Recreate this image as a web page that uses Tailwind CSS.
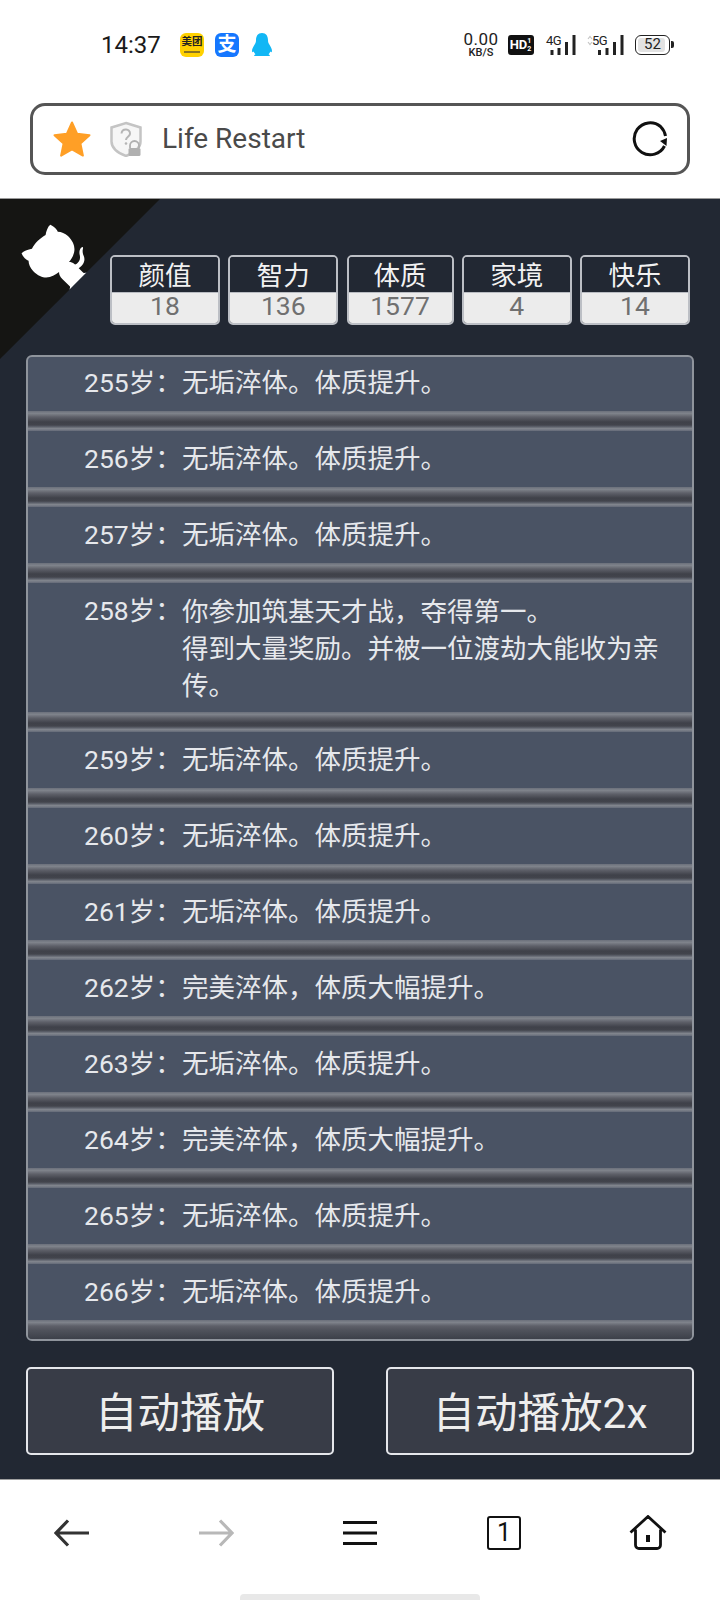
<!DOCTYPE html>
<html lang="zh-CN">
<head>
    <meta charset="UTF-8">
    <meta name="viewport" content="width=device-width, initial-scale=1.0">
    <title>Life Restart</title>
    <script src="https://cdn.jsdelivr.net/npm/@tailwindcss/browser@4"></script>
</head>
<body class="bg-white font-['Roboto','Noto_Sans_CJK_SC',sans-serif]">
<div class="w-[720px] h-[1600px] flex flex-col overflow-hidden">

    <!-- browser chrome -->
    <header class="h-[199px] shrink-0 bg-white border-b border-[#9a9a9a] pt-[30px]">
        <div class="h-[30px] flex items-center pl-[101px] pr-[50px]">
            <span class="w-[60px] text-[24px] leading-[30px] text-[#1a1a1a]">14:37</span>
            <div class="ml-[19px] w-[24px] h-[24px] rounded-[6px] bg-[#ffd100] flex flex-col items-center overflow-hidden">
                <span class="text-[10.5px] leading-[15px] mt-[1px] font-bold text-[#222]">美团</span>
                <span class="w-[16px] h-[2px] mt-[2px] bg-[#8a7420]"></span>
            </div>
            <div class="ml-[11px] w-[24px] h-[24px] rounded-[6px] bg-[#1677ff] flex items-center justify-center">
                <span class="text-[19px] leading-[24px] font-bold text-white">支</span>
            </div>
            <svg class="ml-[13px]" width="20" height="24" viewBox="0 0 20 24"><path d="M10 0C5.8 0 4 3.2 4 7.2c0 1.4-.3 2.6-1.2 4C1.400 13.400 0 15.800 0 18c0 1.400.8 1.500 1.700.4.300 1.100 1 2.100 1.800 2.800-.9.400-1.500 1-1.300 1.800h15.600c.2-.8-.4-1.400-1.300-1.800.8-.7 1.500-1.700 1.800-2.800.9 1.100 1.700 1 1.700-.4 0-2.200-1.400-4.600-2.800-6.800-.9-1.400-1.200-2.600-1.200-4C16 3.200 14.200 0 10 0z" fill="#12b7f5"/></svg>

            <div class="ml-auto flex items-center">
                <div class="w-[36px] flex flex-col items-center text-[#222]">
                    <span class="text-[17px] leading-[15px] tracking-[0.5px]">0.00</span>
                    <span class="text-[11px] leading-[11px] font-medium">KB/S</span>
                </div>
                <div class="ml-[9px] w-[26px] h-[20px] rounded-[3px] bg-[#111] flex items-center justify-center">
                    <span class="text-[13px] leading-[20px] font-bold text-white">HD</span>
                    <span class="text-[7px] leading-[8px] font-bold text-white w-[5px]">1 2</span>
                </div>
                <div class="ml-[12px] relative w-[30px] h-[20px]">
                    <span class="absolute left-0 -top-[1px] text-[13px] leading-[13px] tracking-[-0.5px] text-[#222]">4G</span>
                    <svg class="absolute left-0 top-0" width="30" height="20" viewBox="0 0 30 20" fill="#222"><rect x="4.500" y="15" width="3" height="5"/><rect x="11.500" y="13" width="3" height="7"/><rect x="19" y="7" width="3" height="13"/><rect x="26.500" y="0" width="3" height="20"/></svg>
                </div>
                <div class="ml-[11px] relative w-[37px] h-[20px]">
                    <span class="absolute left-[5px] -top-[1px] text-[13px] leading-[13px] tracking-[-0.5px] text-[#222]">5G</span>
                    <svg class="absolute left-0 top-0" width="37" height="20" viewBox="0 0 37 20"><path d="M1 4l2-2.500L5 4M1 7l2 2.500L5 7" fill="none" stroke="#c4c4c4" stroke-width="1.200"/><g fill="#222"><rect x="11" y="15" width="3" height="5"/><rect x="18.500" y="13" width="3" height="7"/><rect x="26" y="7" width="3" height="13"/><rect x="33.500" y="0" width="3" height="20"/></g></svg>
                </div>
                <div class="ml-[11px] relative w-[35px] h-[20px] rounded-[6px] border-[1.5px] border-[#222] p-[2px]">
                    <div class="w-[27px] h-full rounded-[3px] bg-[#e2e2e2]"></div>
                    <span class="absolute inset-0 text-center text-[15px] leading-[17px] text-[#222]">52</span>
                    <span class="absolute -right-[4.500px] top-[5px] w-[2.500px] h-[7px] rounded-r-[2px] bg-[#222]"></span>
                </div>
            </div>
        </div>

        <div class="mt-[43px] ml-[30px] w-[660px] h-[72px] rounded-[15px] border-[3px] border-[#555] flex items-center pl-[20px] pr-[19px]">
            <svg width="38" height="36" viewBox="0 0 38 36"><path d="M19 1.500l5.200 11.300 12.300 1.400-9.100 8.300 2.500 12.100L19 28.500 8.100 34.600l2.500-12.100-9.100-8.300 12.300-1.400z" fill="#ff9f26" stroke="#ff9f26" stroke-width="2" stroke-linejoin="round"/></svg>
            <svg class="ml-[18px]" width="34" height="36" viewBox="0 0 34 36"><path d="M17 2l14.500 4.500v14c0 7-6.500 11.500-14.500 14.500C9 32 2.500 27.500 2.500 20.500v-14z" fill="#f6f6f6" stroke="#c4c4c4" stroke-width="2.500"/><path d="M12.500 12.500c.6-5.500 9-5 8.500.3-.3 3-4 3-4 6.200" fill="none" stroke="#b5b5b5" stroke-width="2"/><circle cx="17" cy="22.500" r="1.300" fill="#b5b5b5"/><path d="M21 27v-2.500a4.500 4.500 0 0 1 9 0V27" fill="none" stroke="#b0b0b0" stroke-width="1.800"/><rect x="19.500" y="27" width="12" height="8" rx="1.500" fill="#b0b0b0"/></svg>
            <span class="ml-[19px] text-[28px] leading-[36px] text-[#4a4a4a]">Life Restart</span>
            <svg class="ml-auto" width="36" height="36" viewBox="0 0 36 36"><path d="M32.500 25A16 16 0 1 1 28.500 5.500Q32.500 9.500 33.500 15" fill="none" stroke="#111" stroke-width="3"/><path d="M28 20L35 17L34.500 25z" fill="#111"/></svg>
        </div>
    </header>

    <!-- game -->
    <main class="relative h-[1280px] shrink-0 bg-[#222833] px-[26px]">
        <svg class="absolute left-0 top-0 -scale-x-100" width="160" height="160" viewBox="0 0 250 250">
            <path d="M0,0 L115,115 L130,115 L142,142 L250,250 L250,0 Z" fill="#151513"/>
            <path d="M128.300,109.000 C113.800,99.700 119.000,89.600 119.000,89.600 C122.000,82.700 120.500,78.600 120.500,78.600 C119.200,72.000 123.400,76.300 123.400,76.300 C127.300,80.900 125.500,87.300 125.500,87.300 C122.900,97.600 130.600,101.900 134.400,103.200" fill="#fff"/>
            <path d="M115.000,115.000 C114.900,115.100 118.700,116.500 119.800,115.400 L133.700,101.600 C136.900,99.200 139.900,98.400 142.200,98.600 C133.800,88.000 127.500,74.400 143.800,58.000 C148.500,53.400 154.000,51.200 159.700,51.000 C160.300,49.400 163.200,43.600 171.400,40.100 C171.400,40.100 176.100,42.500 178.800,56.200 C183.100,58.600 187.200,61.800 190.900,65.400 C194.500,69.000 197.700,73.200 200.100,77.600 C213.800,80.200 216.300,84.900 216.300,84.900 C212.700,93.100 206.900,96.000 205.400,96.600 C205.100,102.400 203.000,107.800 198.300,112.500 C181.900,128.900 168.300,122.500 157.700,114.100 C157.900,116.900 156.700,120.900 152.700,124.900 L141.000,136.500 C139.800,137.700 141.600,141.900 141.800,141.800 Z" fill="#fff"/>
        </svg>

        <!-- stats -->
        <div class="relative ml-[84px] pt-[56px] w-[580px] flex justify-between">
            <div class="w-[110px] h-[70px] rounded-[5px] border-2 border-[#bcbfc5] overflow-hidden text-center text-[26.500px]">
                <div class="h-[36px] leading-[38px] text-[#f2f2f2] bg-[#222833] border-b border-[#b9bcc2]">颜值</div>
                <div class="h-[30px] leading-[25px] text-[#707070] bg-[#ececec]">18</div>
            </div>
            <div class="w-[110px] h-[70px] rounded-[5px] border-2 border-[#bcbfc5] overflow-hidden text-center text-[26.500px]">
                <div class="h-[36px] leading-[38px] text-[#f2f2f2] bg-[#222833] border-b border-[#b9bcc2]">智力</div>
                <div class="h-[30px] leading-[25px] text-[#707070] bg-[#ececec]">136</div>
            </div>
            <div class="w-[107px] h-[70px] rounded-[5px] border-2 border-[#bcbfc5] overflow-hidden text-center text-[26.500px]">
                <div class="h-[36px] leading-[38px] text-[#f2f2f2] bg-[#222833] border-b border-[#b9bcc2]">体质</div>
                <div class="h-[30px] leading-[25px] text-[#707070] bg-[#ececec]">1577</div>
            </div>
            <div class="w-[110px] h-[70px] rounded-[5px] border-2 border-[#bcbfc5] overflow-hidden text-center text-[26.500px]">
                <div class="h-[36px] leading-[38px] text-[#f2f2f2] bg-[#222833] border-b border-[#b9bcc2]">家境</div>
                <div class="h-[30px] leading-[25px] text-[#707070] bg-[#ececec]">4</div>
            </div>
            <div class="w-[110px] h-[70px] rounded-[5px] border-2 border-[#bcbfc5] overflow-hidden text-center text-[26.500px]">
                <div class="h-[36px] leading-[38px] text-[#f2f2f2] bg-[#222833] border-b border-[#b9bcc2]">快乐</div>
                <div class="h-[30px] leading-[25px] text-[#707070] bg-[#ececec]">14</div>
            </div>
        </div>

        <!-- life trajectory -->
        <div class="relative mt-[30px] h-[986px] rounded-[6px] border-2 border-[#8f949c] bg-[#4a5364] overflow-hidden text-[26.500px] leading-[36.500px] text-[#e6e8ec]">
            <div class="-mt-[2px]">
                <div class="flex h-[56px] pt-[10px] pl-[56px]"><span class="w-[98px] shrink-0">255岁：</span><span>无垢淬体。体质提升。</span></div>
                <div class="h-[20px] bg-[linear-gradient(#6b707b_0,#7f838b_12%,#5e6069_30%,#3f4149_55%,#42444c_70%,#5a5e68_78%,#82868e_88%,#646a78_100%)]"></div>
                <div class="flex h-[56px] pt-[10px] pl-[56px]"><span class="w-[98px] shrink-0">256岁：</span><span>无垢淬体。体质提升。</span></div>
                <div class="h-[20px] bg-[linear-gradient(#6b707b_0,#7f838b_12%,#5e6069_30%,#3f4149_55%,#42444c_70%,#5a5e68_78%,#82868e_88%,#646a78_100%)]"></div>
                <div class="flex h-[56px] pt-[10px] pl-[56px]"><span class="w-[98px] shrink-0">257岁：</span><span>无垢淬体。体质提升。</span></div>
                <div class="h-[20px] bg-[linear-gradient(#6b707b_0,#7f838b_12%,#5e6069_30%,#3f4149_55%,#42444c_70%,#5a5e68_78%,#82868e_88%,#646a78_100%)]"></div>
                <div class="flex h-[129px] pt-[10px] pl-[56px] pr-[17px]"><span class="w-[98px] shrink-0">258岁：</span><span class="leading-[37px]">你参加筑基天才战，夺得第一。<br>得到大量奖励。并被一位渡劫大能收为亲传。</span></div>
                <div class="h-[20px] bg-[linear-gradient(#6b707b_0,#7f838b_12%,#5e6069_30%,#3f4149_55%,#42444c_70%,#5a5e68_78%,#82868e_88%,#646a78_100%)]"></div>
                <div class="flex h-[56px] pt-[10px] pl-[56px]"><span class="w-[98px] shrink-0">259岁：</span><span>无垢淬体。体质提升。</span></div>
                <div class="h-[20px] bg-[linear-gradient(#6b707b_0,#7f838b_12%,#5e6069_30%,#3f4149_55%,#42444c_70%,#5a5e68_78%,#82868e_88%,#646a78_100%)]"></div>
                <div class="flex h-[56px] pt-[10px] pl-[56px]"><span class="w-[98px] shrink-0">260岁：</span><span>无垢淬体。体质提升。</span></div>
                <div class="h-[20px] bg-[linear-gradient(#6b707b_0,#7f838b_12%,#5e6069_30%,#3f4149_55%,#42444c_70%,#5a5e68_78%,#82868e_88%,#646a78_100%)]"></div>
                <div class="flex h-[56px] pt-[10px] pl-[56px]"><span class="w-[98px] shrink-0">261岁：</span><span>无垢淬体。体质提升。</span></div>
                <div class="h-[20px] bg-[linear-gradient(#6b707b_0,#7f838b_12%,#5e6069_30%,#3f4149_55%,#42444c_70%,#5a5e68_78%,#82868e_88%,#646a78_100%)]"></div>
                <div class="flex h-[56px] pt-[10px] pl-[56px]"><span class="w-[98px] shrink-0">262岁：</span><span>完美淬体，体质大幅提升。</span></div>
                <div class="h-[20px] bg-[linear-gradient(#6b707b_0,#7f838b_12%,#5e6069_30%,#3f4149_55%,#42444c_70%,#5a5e68_78%,#82868e_88%,#646a78_100%)]"></div>
                <div class="flex h-[56px] pt-[10px] pl-[56px]"><span class="w-[98px] shrink-0">263岁：</span><span>无垢淬体。体质提升。</span></div>
                <div class="h-[20px] bg-[linear-gradient(#6b707b_0,#7f838b_12%,#5e6069_30%,#3f4149_55%,#42444c_70%,#5a5e68_78%,#82868e_88%,#646a78_100%)]"></div>
                <div class="flex h-[56px] pt-[10px] pl-[56px]"><span class="w-[98px] shrink-0">264岁：</span><span>完美淬体，体质大幅提升。</span></div>
                <div class="h-[20px] bg-[linear-gradient(#6b707b_0,#7f838b_12%,#5e6069_30%,#3f4149_55%,#42444c_70%,#5a5e68_78%,#82868e_88%,#646a78_100%)]"></div>
                <div class="flex h-[56px] pt-[10px] pl-[56px]"><span class="w-[98px] shrink-0">265岁：</span><span>无垢淬体。体质提升。</span></div>
                <div class="h-[20px] bg-[linear-gradient(#6b707b_0,#7f838b_12%,#5e6069_30%,#3f4149_55%,#42444c_70%,#5a5e68_78%,#82868e_88%,#646a78_100%)]"></div>
                <div class="flex h-[56px] pt-[10px] pl-[56px]"><span class="w-[98px] shrink-0">266岁：</span><span>无垢淬体。体质提升。</span></div>
                <div class="h-[20px] bg-[linear-gradient(#6b707b_0,#7f838b_12%,#5e6069_30%,#50535c_50%,#3a3e47_100%)]"></div>
            </div>
        </div>

        <!-- buttons -->
        <div class="mt-[26px] flex justify-between">
            <button class="w-[308px] h-[88px] rounded-[5px] border-2 border-[#e5e7eb] bg-[#383c47] pt-[5px] text-[42.500px] text-[#eeeeee]">自动播放</button>
            <button class="w-[308px] h-[88px] rounded-[5px] border-2 border-[#e5e7eb] bg-[#383c47] pt-[5px] text-[42.500px] text-[#eeeeee]">自动播放2x</button>
        </div>
    </main>

    <!-- browser toolbar -->
    <footer class="relative h-[121px] shrink-0 bg-white border-t border-[#a0a0a0]">
        <div class="grid grid-cols-5 pt-[35px]">
            <div class="flex justify-center"><svg width="36" height="36" viewBox="0 0 36 36" fill="none" stroke="#333" stroke-width="3.200"><path d="M35 18H2M14 5.500L2 18l12 12.500"/></svg></div>
            <div class="flex justify-center"><svg width="36" height="36" viewBox="0 0 36 36" fill="none" stroke="#b8b8b8" stroke-width="3.200"><path d="M1 18h33M22 5.500L34 18 22 30.500"/></svg></div>
            <div class="flex justify-center"><svg width="36" height="36" viewBox="0 0 36 36" fill="none" stroke="#111" stroke-width="3"><path d="M1 7.500h34M1 18h34M1 28.500h34"/></svg></div>
            <div class="flex justify-center"><div class="w-[34px] h-[34px] mt-[1px] rounded-[3px] border-[2.500px] border-[#111] text-center text-[25px] leading-[29px] text-[#111]">1</div></div>
            <div class="flex justify-center"><svg width="38" height="36" viewBox="0 0 38 36" fill="none" stroke="#111" stroke-width="2.800"><path d="M1.500 17.500L19 1.500l17.500 16M6.500 14.500V30a3.500 3.500 0 0 0 3.500 3.500h18a3.500 3.500 0 0 0 3.500-3.500V14.500"/><rect x="17" y="20" width="4" height="7" fill="#111" stroke="none"/></svg></div>
        </div>
        <div class="absolute bottom-0 left-[240px] w-[240px] h-[6px] rounded-t-[4px] bg-[#e8e8e8]"></div>
    </footer>
</div>
</body>
</html>
